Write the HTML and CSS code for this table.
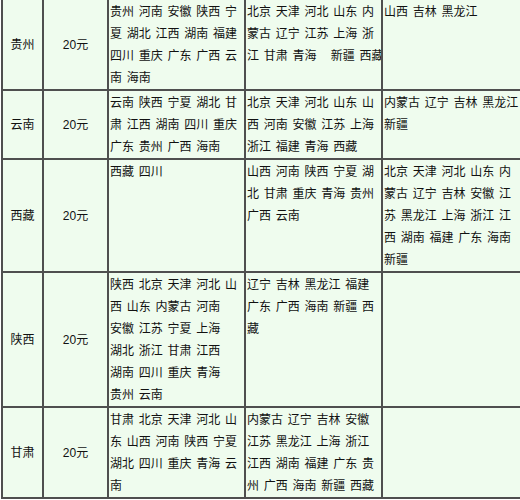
FILE: index.html
```html
<!DOCTYPE html>
<html lang="zh">
<head>
<meta charset="utf-8">
<link rel="stylesheet" href="styles.css">
</head>
<body>
<div class="grid">
  <div class="cell mid">贵州</div>
  <div class="cell mid">20元</div>
  <div class="cell txt">贵州 河南 安徽 陕西 宁<br>夏 湖北 江西 湖南 福建<br>四川 重庆 广东 广西 云<br>南 海南</div>
  <div class="cell txt">北京 天津 河北 山东 内<br>蒙古 辽宁 江苏 上海 浙<br>江 甘肃 青海 &nbsp; 新疆 西藏</div>
  <div class="cell txt">山西 吉林 黑龙江</div>

  <div class="cell mid">云南</div>
  <div class="cell mid">20元</div>
  <div class="cell txt">云南 陕西 宁夏 湖北 甘<br>肃 江西 湖南 四川 重庆<br>广东 贵州 广西 海南</div>
  <div class="cell txt">北京 天津 河北 山东 山<br>西 河南 安徽 江苏 上海<br>浙江 福建 青海 西藏</div>
  <div class="cell txt">内蒙古 辽宁 吉林 黑龙江<br>新疆</div>

  <div class="cell mid">西藏</div>
  <div class="cell mid">20元</div>
  <div class="cell txt">西藏 四川</div>
  <div class="cell txt">山西 河南 陕西 宁夏 湖<br>北 甘肃 重庆 青海 贵州<br>广西 云南</div>
  <div class="cell txt">北京 天津 河北 山东 内<br>蒙古 辽宁 吉林 安徽 江<br>苏 黑龙江 上海 浙江 江<br>西 湖南 福建 广东 海南<br>新疆</div>

  <div class="cell mid">陕西</div>
  <div class="cell mid">20元</div>
  <div class="cell txt">陕西 北京 天津 河北 山<br>西 山东 内蒙古 河南<br>安徽 江苏 宁夏 上海<br>湖北 浙江 甘肃 江西<br>湖南 四川 重庆 青海<br>贵州 云南</div>
  <div class="cell txt">辽宁 吉林 黑龙江 福建<br>广东 广西 海南 新疆 西<br>藏</div>
  <div class="cell txt"></div>

  <div class="cell mid">甘肃</div>
  <div class="cell mid">20元</div>
  <div class="cell txt">甘肃 北京 天津 河北 山<br>东 山西 河南 陕西 宁夏<br>湖北 四川 重庆 青海 云<br>南</div>
  <div class="cell txt">内蒙古 辽宁 吉林 安徽<br>江苏 黑龙江 上海 浙江<br>江西 湖南 福建 广东 贵<br>州 广西 海南 新疆 西藏</div>
  <div class="cell txt"></div>
</div>
</body>
</html>
```

FILE: styles.css
```css
html, body {
  margin: 0;
  padding: 0;
  background: #ffffff;
  overflow: hidden;
}

body {
  font-family: "Liberation Sans", "Noto Sans CJK SC", sans-serif;
  font-size: 12px;
  color: #111111;
}

.grid {
  display: grid;
  grid-template-columns: 41px 65px 137px 137px 140px;
  width: max-content;
  margin-top: -2px;
  margin-left: 1px;
  border-left: 2px solid #4f4f4f;
  border-top: 2px solid #4f4f4f;
}

.cell {
  box-sizing: border-box;
  background: #effcee;
  border-right: 2px solid #4f4f4f;
  border-bottom: 2px solid #4f4f4f;
  line-height: 22px;
}

.mid {
  display: flex;
  align-items: center;
  justify-content: center;
}

.txt {
  padding: 1px 0 0 1px;
  white-space: nowrap;
  word-spacing: 1.4px;
  overflow: hidden;
}
```
